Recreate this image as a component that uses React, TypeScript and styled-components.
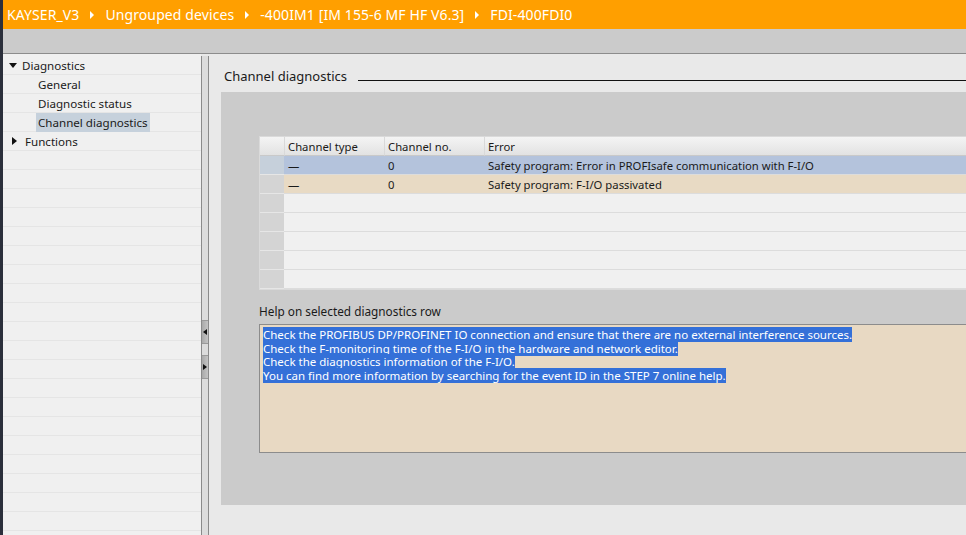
import React from "react";
import styled, { createGlobalStyle } from "styled-components";

const Global = createGlobalStyle`
  html, body { margin: 0; padding: 0; }
  body { font-family: "Noto Sans", "Open Sans", sans-serif; background: #e9e9e9; }
  #root { width: 966px; height: 535px; overflow: hidden; }
`;

const Frame = styled.div`
  display: flex;
  width: 966px;
  height: 535px;
  overflow: hidden;
  background: #e9e9e9;
`;

const EdgeStripe = styled.div`
  width: 3px;
  flex: none;
  background: #2b2f3b;
`;

const Main = styled.div`
  flex: 1;
  display: flex;
  flex-direction: column;
  min-width: 0;
`;

const Header = styled.div`
  height: 29px;
  flex: none;
  background: #ff9f00;
  display: flex;
  align-items: center;
  padding-left: 4px;
  gap: 11px;
  color: #fff;
  font-size: 14px;
  white-space: nowrap;
`;

const Crumb = styled.span`
  letter-spacing: 0.1px;
`;

const CrumbArrow = styled.span`
  width: 0;
  height: 0;
  border-top: 4px solid transparent;
  border-bottom: 4px solid transparent;
  border-left: 4px solid #fff;
`;

const Toolbar = styled.div`
  height: 24px;
  flex: none;
  background: #cbcbcb;
  border-bottom: 1px solid #8c8c8c;
`;

const Body = styled.div`
  flex: 1;
  display: flex;
  min-height: 0;
`;

const Tree = styled.div`
  width: 198px;
  flex: none;
  background: #f0f0f0;
  padding-top: 2px;
  display: flex;
  flex-direction: column;
`;

const TreeRow = styled.div<{ $indent: number }>`
  height: 18px;
  flex: none;
  border-bottom: 1px solid #e5e5e5;
  display: flex;
  align-items: center;
  padding-left: ${(p) => p.$indent}px;
  font-size: 11.6px;
  color: #1a1a1a;
`;

const TreeLabel = styled.span<{ $selected?: boolean }>`
  padding: 1px 2px;
  line-height: 17px;
  background: ${(p) => (p.$selected ? "#c6d1dc" : "transparent")};
`;

const Caret = styled.span<{ $open?: boolean }>`
  width: 0;
  height: 0;
  margin-right: 3px;
  ${(p) =>
    p.$open
      ? `border-left: 4px solid transparent; border-right: 4px solid transparent; border-top: 5px solid #111; margin-left: 0px;`
      : `border-top: 4px solid transparent; border-bottom: 4px solid transparent; border-left: 5px solid #111; margin-left: 3px; margin-right: 6px;`}
`;

const Splitter = styled.div`
  width: 6px;
  flex: none;
  margin-top: 2px;
  background: #dcdcdc;
  border-left: 1px solid #8a8a8a;
  border-right: 1px solid #8a8a8a;
  display: flex;
  flex-direction: column;
  padding-top: 264px;
  gap: 11px;
`;

const SplitButton = styled.div`
  height: 22px;
  background: linear-gradient(to right, #a9a9a9, #c4c4c4);
  border-top: 1px solid #9a9a9a;
  border-bottom: 1px solid #9a9a9a;
  display: flex;
  align-items: center;
  justify-content: center;
`;

const SplitArrow = styled.span<{ $dir: "left" | "right" }>`
  width: 0;
  height: 0;
  border-top: 3px solid transparent;
  border-bottom: 3px solid transparent;
  ${(p) => (p.$dir === "left" ? "border-right: 4px solid #111;" : "border-left: 4px solid #111;")}
`;

const Content = styled.div`
  flex: 1;
  min-width: 0;
  display: flex;
  flex-direction: column;
  padding: 13px 0 0 12px;
`;

const TitleRow = styled.div`
  display: flex;
  align-items: center;
  height: 18px;
  padding-left: 3px;
  gap: 11px;
`;

const Title = styled.span`
  font-size: 13px;
  color: #1a1a1a;
  white-space: nowrap;
`;

const TitleLine = styled.div`
  flex: 1;
  height: 1px;
  background: #111;
  margin-top: 8px;
`;

const Panel = styled.div`
  margin-top: 7px;
  width: 800px;
  height: 413px;
  background: #cbcbcb;
  padding: 44px 0 0 38px;
  box-sizing: border-box;
`;

const Table = styled.div`
  width: 760px;
  border: 1px solid #dadada;
  border-right: none;
  display: grid;
  grid-template-columns: 24px 100px 100px 1fr;
`;

const HeadCell = styled.div<{ $first?: boolean }>`
  height: 18px;
  border-bottom: 1px solid #c9c9c9;
  border-left: ${(p) => (p.$first ? "none" : "1px solid #d9d9d9")};
  background: linear-gradient(to bottom, #f4f4f4, #e2e2e2);
  font-size: 11.3px;
  color: #1a1a1a;
  display: flex;
  align-items: center;
  padding-left: 3px;
  white-space: nowrap;
`;

const RowHead = styled.div<{ $tone: string }>`
  height: 18px;
  border-bottom: 1px solid #e6e6e6;
  background: ${(p) => p.$tone};
`;

const Cell = styled.div<{ $bg: string }>`
  height: 18px;
  border-bottom: 1px solid #dcdcdc;
  background: ${(p) => p.$bg};
  font-size: 11.3px;
  color: #1a1a1a;
  display: flex;
  align-items: center;
  padding-left: 4px;
  white-space: nowrap;
`;

const HelpLabel = styled.div`
  margin-top: 12px;
  height: 18px;
  font-size: 11.8px;
  color: #1a1a1a;
  display: flex;
  align-items: center;
`;

const HelpBox = styled.div`
  margin-top: 4px;
  width: 760px;
  height: 129px;
  background: #e8d9c3;
  border: 1px solid #8c8c8c;
  border-right: none;
  padding: 3px 0 0 3px;
  box-sizing: border-box;
`;

const HelpLine = styled.div`
  height: 13.6px;
  line-height: 13.6px;
  font-size: 11.5px;
  white-space: nowrap;
`;

const Selected = styled.span`
  background: #3470d8;
  color: #fff;
`;

const rows = [
  { type: "—", no: "0", err: "Safety program: Error in PROFIsafe communication with F-I/O", bg: "#b4c3dc", head: "#c6d0db" },
  { type: "—", no: "0", err: "Safety program: F-I/O passivated", bg: "#e8dac4", head: "#d4d4d4" },
  { type: "", no: "", err: "", bg: "#f0f0f0", head: "#d4d4d4" },
  { type: "", no: "", err: "", bg: "#f0f0f0", head: "#d4d4d4" },
  { type: "", no: "", err: "", bg: "#f0f0f0", head: "#d4d4d4" },
  { type: "", no: "", err: "", bg: "#f0f0f0", head: "#d4d4d4" },
  { type: "", no: "", err: "", bg: "#f0f0f0", head: "#d4d4d4" },
];

const helpLines = [
  "Check the PROFIBUS DP/PROFINET IO connection and ensure that there are no external interference sources. ",
  "Check the F-monitoring time of the F-I/O in the hardware and network editor.",
  "Check the diagnostics information of the F-I/O.",
  "You can find more information by searching for the event ID in the STEP 7 online help.",
];

export default function App() {
  return (
    <Frame>
      <Global />
      <EdgeStripe />
      <Main>
        <Header>
          <Crumb>KAYSER_V3</Crumb>
          <CrumbArrow />
          <Crumb>Ungrouped devices</Crumb>
          <CrumbArrow />
          <Crumb>-400IM1 [IM 155-6 MF HF V6.3]</Crumb>
          <CrumbArrow />
          <Crumb>FDI-400FDI0</Crumb>
        </Header>
        <Toolbar />
        <Body>
          <Tree>
            <TreeRow $indent={6}>
              <Caret $open />
              <TreeLabel>Diagnostics</TreeLabel>
            </TreeRow>
            <TreeRow $indent={33}>
              <TreeLabel>General</TreeLabel>
            </TreeRow>
            <TreeRow $indent={33}>
              <TreeLabel>Diagnostic status</TreeLabel>
            </TreeRow>
            <TreeRow $indent={33}>
              <TreeLabel $selected>Channel diagnostics</TreeLabel>
            </TreeRow>
            <TreeRow $indent={6}>
              <Caret />
              <TreeLabel>Functions</TreeLabel>
            </TreeRow>
            {Array.from({ length: 20 }).map((_, i) => (
              <TreeRow key={i} $indent={0} />
            ))}
          </Tree>
          <Splitter>
            <SplitButton>
              <SplitArrow $dir="left" />
            </SplitButton>
            <SplitButton>
              <SplitArrow $dir="right" />
            </SplitButton>
          </Splitter>
          <Content>
            <TitleRow>
              <Title>Channel diagnostics</Title>
              <TitleLine />
            </TitleRow>
            <Panel>
              <Table>
                <HeadCell $first />
                <HeadCell>Channel type</HeadCell>
                <HeadCell>Channel no.</HeadCell>
                <HeadCell>Error</HeadCell>
                {rows.map((r, i) => (
                  <React.Fragment key={i}>
                    <RowHead $tone={r.head} />
                    <Cell $bg={r.bg}>{r.type}</Cell>
                    <Cell $bg={r.bg}>{r.no}</Cell>
                    <Cell $bg={r.bg}>{r.err}</Cell>
                  </React.Fragment>
                ))}
              </Table>
              <HelpLabel>Help on selected diagnostics row</HelpLabel>
              <HelpBox>
                {helpLines.map((l, i) => (
                  <HelpLine key={i}>
                    <Selected>{l}</Selected>
                  </HelpLine>
                ))}
              </HelpBox>
            </Panel>
          </Content>
        </Body>
      </Main>
    </Frame>
  );
}
